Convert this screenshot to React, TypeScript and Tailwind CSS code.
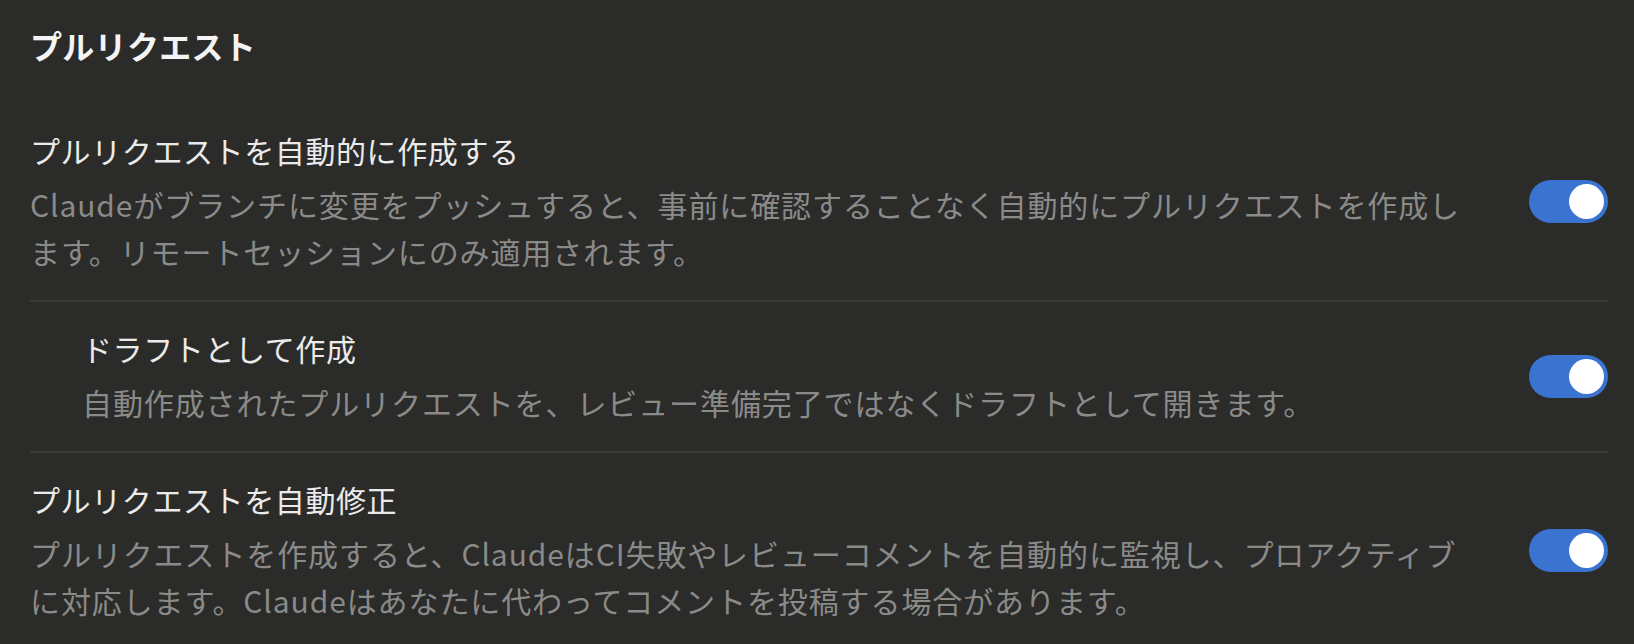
import { useState } from "react";

type Setting = {
  id: string;
  title: string;
  description: string;
  nested?: boolean;
};

const settings: Setting[] = [
  {
    id: "auto-create",
    title: "プルリクエストを自動的に作成する",
    description:
      "Claudeがブランチに変更をプッシュすると、事前に確認することなく自動的にプルリクエストを作成します。リモートセッションにのみ適用されます。",
  },
  {
    id: "draft",
    title: "ドラフトとして作成",
    description:
      "自動作成されたプルリクエストを、レビュー準備完了ではなくドラフトとして開きます。",
    nested: true,
  },
  {
    id: "auto-fix",
    title: "プルリクエストを自動修正",
    description:
      "プルリクエストを作成すると、ClaudeはCI失敗やレビューコメントを自動的に監視し、プロアクティブに対応します。Claudeはあなたに代わってコメントを投稿する場合があります。",
  },
];

function Toggle({ on, onChange }: { on: boolean; onChange: () => void }) {
  return (
    <button
      onClick={onChange}
      className={`flex h-[43px] w-[79px] shrink-0 items-center rounded-full px-[4px] transition-colors ${
        on ? "justify-end bg-[#3b73d1]" : "justify-start bg-[#4a4a4a]"
      }`}
    >
      <span className="h-[35px] w-[35px] rounded-full bg-white" />
    </button>
  );
}

export default function App() {
  const [enabled, setEnabled] = useState<Record<string, boolean>>({
    "auto-create": true,
    draft: true,
    "auto-fix": true,
  });

  return (
    <div
      className="min-h-screen bg-[#2b2b2a] pl-[30px] pr-[26px] pt-[23px]"
      style={{ fontFamily: '"Noto Sans CJK JP", "Noto Sans", sans-serif' }}
    >
      {/* Section heading */}
      <h2 className="text-[32px] font-bold leading-[44px] tracking-[0.3px] text-[#f4f4f4]">
        プルリクエスト
      </h2>

      <div className="mt-[37px]">
        {settings.map((s, i) => (
          <div
            key={s.id}
            className={`flex items-center gap-[64px] pt-[24px] pb-[25px] ${
              i > 0 ? "border-t-2 border-[#393938]" : ""
            }`}
          >
            <div className={`flex-1 ${s.nested ? "pl-[52px]" : ""}`}>
              <div className="text-[30px] leading-[44px] tracking-[0.6px] text-[#ebebeb]">
                {s.title}
              </div>
              <p className="mt-[9px] text-[30px] leading-[47px] tracking-[0.9px] text-[#8a8a89]">
                {s.description}
              </p>
            </div>
            <Toggle
              on={enabled[s.id]}
              onChange={() =>
                setEnabled((prev) => ({ ...prev, [s.id]: !prev[s.id] }))
              }
            />
          </div>
        ))}
      </div>
    </div>
  );
}
